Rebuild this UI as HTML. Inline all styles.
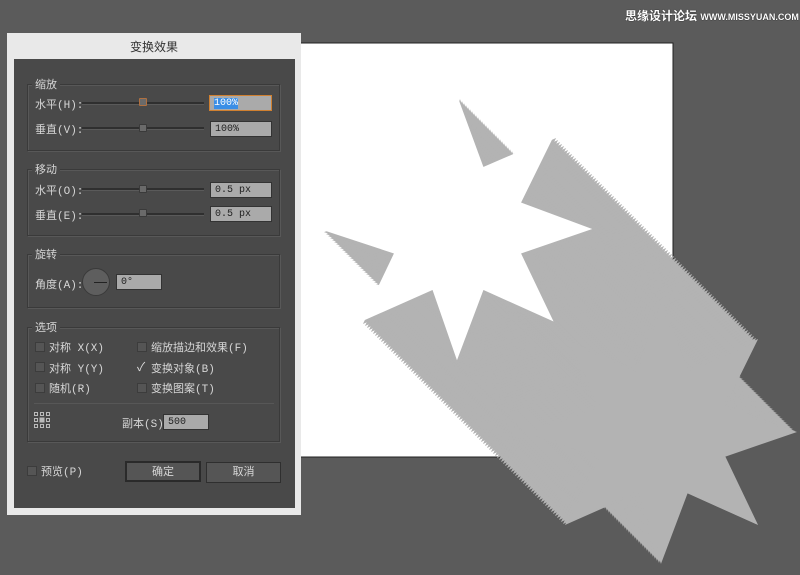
<!DOCTYPE html>
<html><head><meta charset="utf-8"><style>
*{margin:0;padding:0;box-sizing:border-box}
body{width:800px;height:575px;background:#5b5b5b;position:relative;overflow:hidden;font-family:"Liberation Mono","Noto Sans CJK SC",monospace;font-size:11px;color:#d6d6d6}
.a{position:absolute}
.dlg{left:7px;top:33px;width:294px;height:482px;background:#e9e9e9}
.title{left:7px;top:38px;width:294px;text-align:center;color:#333;font-size:12px;font-family:"Liberation Sans","Noto Sans CJK SC",sans-serif}
.panel{left:14px;top:59px;width:281px;height:449px;background:#494949}
.grp{border:1px solid #3a3a3a;box-shadow:1px 1px 0 #585858 inset,1px 1px 0 #585858}
.lbl{background:#494949;padding:0 3px;font-family:"Liberation Sans","Noto Sans CJK SC",sans-serif;font-size:11px}
.sl{height:3px;background:#2f2f2f;border-bottom:1px solid #5a5a5a}
.kn{width:8px;height:8px;background:#6a6a6a;border:1px solid #3a3a3a;border-radius:1px}
.in{background:#aaaaaa;border:1px solid #333;color:#222;font-size:10px;padding-left:4px;line-height:15px;height:16px}
.cb{width:10px;height:10px;background:#555;border:1px solid #3c3c3c}
.btn{height:21px;border:1px solid #2f2f2f;background:#555;text-align:center;line-height:19px;font-family:"Liberation Sans","Noto Sans CJK SC",sans-serif}
</style></head><body>
<svg class="a" style="left:0;top:0" width="800" height="575">
<rect x="300" y="43" width="373" height="414" fill="#fff" stroke="#222" stroke-width="1"/>
<defs><polygon id="s" points="458,100 483,168 552,138 520,203 590,229 520,253 552,320 483,289 457,358 433,289 363,320 395,253 325,230 395,203 363,138 433,168"/></defs>
<g fill="#b3b3b3" stroke="#b3b3b3" stroke-width="2">
<use href="#s" x="2" y="2"/><use href="#s" x="4" y="4"/><use href="#s" x="6" y="6"/><use href="#s" x="8" y="8"/><use href="#s" x="10" y="10"/><use href="#s" x="12" y="12"/><use href="#s" x="14" y="14"/><use href="#s" x="16" y="16"/><use href="#s" x="18" y="18"/><use href="#s" x="20" y="20"/>
<use href="#s" x="22" y="22"/><use href="#s" x="24" y="24"/><use href="#s" x="26" y="26"/><use href="#s" x="28" y="28"/><use href="#s" x="30" y="30"/><use href="#s" x="32" y="32"/><use href="#s" x="34" y="34"/><use href="#s" x="36" y="36"/><use href="#s" x="38" y="38"/><use href="#s" x="40" y="40"/>
<use href="#s" x="42" y="42"/><use href="#s" x="44" y="44"/><use href="#s" x="46" y="46"/><use href="#s" x="48" y="48"/><use href="#s" x="50" y="50"/><use href="#s" x="52" y="52"/><use href="#s" x="54" y="54"/><use href="#s" x="56" y="56"/><use href="#s" x="58" y="58"/><use href="#s" x="60" y="60"/>
<use href="#s" x="62" y="62"/><use href="#s" x="64" y="64"/><use href="#s" x="66" y="66"/><use href="#s" x="68" y="68"/><use href="#s" x="70" y="70"/><use href="#s" x="72" y="72"/><use href="#s" x="74" y="74"/><use href="#s" x="76" y="76"/><use href="#s" x="78" y="78"/><use href="#s" x="80" y="80"/>
<use href="#s" x="82" y="82"/><use href="#s" x="84" y="84"/><use href="#s" x="86" y="86"/><use href="#s" x="88" y="88"/><use href="#s" x="90" y="90"/><use href="#s" x="92" y="92"/><use href="#s" x="94" y="94"/><use href="#s" x="96" y="96"/><use href="#s" x="98" y="98"/><use href="#s" x="100" y="100"/>
<use href="#s" x="102" y="102"/><use href="#s" x="104" y="104"/><use href="#s" x="106" y="106"/><use href="#s" x="108" y="108"/><use href="#s" x="110" y="110"/><use href="#s" x="112" y="112"/><use href="#s" x="114" y="114"/><use href="#s" x="116" y="116"/><use href="#s" x="118" y="118"/><use href="#s" x="120" y="120"/>
<use href="#s" x="122" y="122"/><use href="#s" x="124" y="124"/><use href="#s" x="126" y="126"/><use href="#s" x="128" y="128"/><use href="#s" x="130" y="130"/><use href="#s" x="132" y="132"/><use href="#s" x="134" y="134"/><use href="#s" x="136" y="136"/><use href="#s" x="138" y="138"/><use href="#s" x="140" y="140"/>
<use href="#s" x="142" y="142"/><use href="#s" x="144" y="144"/><use href="#s" x="146" y="146"/><use href="#s" x="148" y="148"/><use href="#s" x="150" y="150"/><use href="#s" x="152" y="152"/><use href="#s" x="154" y="154"/><use href="#s" x="156" y="156"/><use href="#s" x="158" y="158"/><use href="#s" x="160" y="160"/>
<use href="#s" x="162" y="162"/><use href="#s" x="164" y="164"/><use href="#s" x="166" y="166"/><use href="#s" x="168" y="168"/><use href="#s" x="170" y="170"/><use href="#s" x="172" y="172"/><use href="#s" x="174" y="174"/><use href="#s" x="176" y="176"/><use href="#s" x="178" y="178"/><use href="#s" x="180" y="180"/>
<use href="#s" x="182" y="182"/><use href="#s" x="184" y="184"/><use href="#s" x="186" y="186"/><use href="#s" x="188" y="188"/><use href="#s" x="190" y="190"/><use href="#s" x="192" y="192"/><use href="#s" x="194" y="194"/><use href="#s" x="196" y="196"/><use href="#s" x="198" y="198"/><use href="#s" x="200" y="200"/>
<use href="#s" x="202" y="202"/><use href="#s" x="204" y="203"/>
</g>
<use href="#s" fill="#fff" stroke="#fff" stroke-width="1.5"/>
</svg>
<div class="a" style="left:625px;top:7px;color:#fff;font-size:12px;font-family:'Liberation Sans','Noto Sans CJK SC',sans-serif;font-weight:bold;text-shadow:0 0 1px #000">思缘设计论坛 <span style="font-size:9px">WWW.MISSYUAN.COM</span></div>

<div class="a dlg"></div>
<div class="a title">变换效果</div>
<div class="a panel"></div>

<div class="a grp" style="left:27px;top:84px;width:253px;height:67px"></div>
<div class="a lbl" style="left:32px;top:76px">缩放</div>
<div class="a" style="left:35px;top:96px">水平(H):</div>
<div class="a sl" style="left:82px;top:102px;width:122px"></div>
<div class="a kn" style="left:139px;top:98px;border-color:#b07040"></div>
<div class="a in" style="left:209px;top:95px;width:63px;border:1px solid #d08030"><span style="background:#3a8ee6;color:#fff">100%</span></div>
<div class="a" style="left:35px;top:121px">垂直(V):</div>
<div class="a sl" style="left:82px;top:127px;width:122px"></div>
<div class="a kn" style="left:139px;top:124px"></div>
<div class="a in" style="left:210px;top:121px;width:62px">100%</div>

<div class="a grp" style="left:27px;top:169px;width:253px;height:67px"></div>
<div class="a lbl" style="left:32px;top:161px">移动</div>
<div class="a" style="left:35px;top:182px">水平(O):</div>
<div class="a sl" style="left:82px;top:188px;width:122px"></div>
<div class="a kn" style="left:139px;top:185px"></div>
<div class="a in" style="left:210px;top:182px;width:62px">0.5 px</div>
<div class="a" style="left:35px;top:207px">垂直(E):</div>
<div class="a sl" style="left:82px;top:213px;width:122px"></div>
<div class="a kn" style="left:139px;top:209px"></div>
<div class="a in" style="left:210px;top:206px;width:62px">0.5 px</div>

<div class="a grp" style="left:27px;top:254px;width:253px;height:54px"></div>
<div class="a lbl" style="left:32px;top:246px">旋转</div>
<div class="a" style="left:35px;top:276px">角度(A):</div>
<div class="a" style="left:82px;top:268px;width:28px;height:28px;border-radius:50%;background:#5e5e5e;border:1px solid #3a3a3a"></div>
<div class="a" style="left:94px;top:282px;width:13px;height:1px;background:#222"></div>
<div class="a in" style="left:116px;top:274px;width:46px">0°</div>

<div class="a grp" style="left:27px;top:327px;width:253px;height:115px"></div>
<div class="a lbl" style="left:32px;top:319px">选项</div>
<div class="a cb" style="left:35px;top:342px"></div><div class="a" style="left:49px;top:339px">对称 X(X)</div>
<div class="a cb" style="left:137px;top:342px"></div><div class="a" style="left:151px;top:339px">缩放描边和效果(F)</div>
<div class="a cb" style="left:35px;top:362px"></div><div class="a" style="left:49px;top:360px">对称 Y(Y)</div>
<div class="a" style="left:137px;top:358px;font-size:12px;color:#ddd">✓</div><div class="a" style="left:151px;top:360px">变换对象(B)</div>
<div class="a cb" style="left:35px;top:383px"></div><div class="a" style="left:49px;top:380px">随机(R)</div>
<div class="a cb" style="left:137px;top:383px"></div><div class="a" style="left:151px;top:380px">变换图案(T)</div>
<div class="a" style="left:34px;top:403px;width:240px;height:1px;background:#3a3a3a;border-bottom:1px solid #575757"></div>
<svg class="a" style="left:33px;top:411px" width="18" height="18" fill="none" stroke="#bbb" stroke-width="1">
<rect x="1.5" y="1.5" width="3" height="3"/><rect x="7.5" y="1.5" width="3" height="3"/><rect x="13.5" y="1.5" width="3" height="3"/>
<rect x="1.5" y="7.5" width="3" height="3"/><rect x="7" y="7" width="4" height="4" fill="#bbb"/><rect x="13.5" y="7.5" width="3" height="3"/>
<rect x="1.5" y="13.5" width="3" height="3"/><rect x="7.5" y="13.5" width="3" height="3"/><rect x="13.5" y="13.5" width="3" height="3"/></svg>
<div class="a" style="left:122px;top:415px">副本(S)</div>
<div class="a in" style="left:163px;top:414px;width:46px">500</div>

<div class="a cb" style="left:27px;top:466px"></div><div class="a" style="left:41px;top:463px">预览(P)</div>
<div class="a btn" style="left:125px;top:461px;width:76px;border:2px solid #2a2a2a">确定</div>
<div class="a btn" style="left:206px;top:462px;width:75px">取消</div>
</body></html>
